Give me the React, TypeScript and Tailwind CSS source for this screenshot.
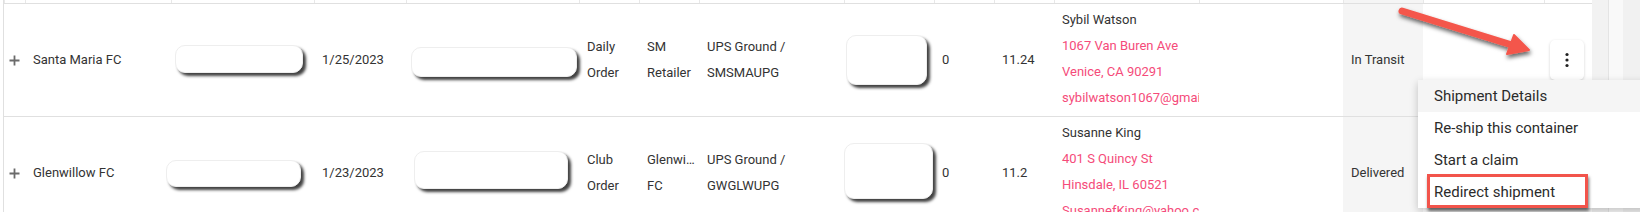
import React from 'react';

type Row = {
  name: string;
  pillA: string;
  date: string;
  pillB: string;
  orderType: string[];
  retailer: string[];
  service: string[];
  box: string;
  qty: string;
  weight: string;
  contact: string;
  address: string[];
  status: string;
};

const rows: Row[] = [
  {
    name: 'Santa Maria FC',
    pillA: 'ml-[4px] w-[128px] h-[28px] mt-[-2px]',
    date: '1/25/2023',
    pillB: 'ml-[5px] w-[166px] h-[30px] mt-[4px]',
    orderType: ['Daily', 'Order'],
    retailer: ['SM', 'Retailer'],
    service: ['UPS Ground /', 'SMSMAUPG'],
    box: 'ml-[2px] w-[81px] h-[50px]',
    qty: '0',
    weight: '11.24',
    contact: 'Sybil Watson',
    address: ['1067 Van Buren Ave', 'Venice, CA 90291', 'sybilwatson1067@gmail.com'],
    status: 'In Transit',
  },
  {
    name: 'Glenwillow FC',
    pillA: 'ml-[-5px] w-[135px] h-[27px] mt-[1px]',
    date: '1/23/2023',
    pillB: 'ml-[8px] w-[154px] h-[38px] mt-[-6px]',
    orderType: ['Club', 'Order'],
    retailer: ['Glenwillow', 'FC'],
    service: ['UPS Ground /', 'GWGLWUPG'],
    box: 'ml-0 w-[89px] h-[56px] mt-[-4px]',
    qty: '0',
    weight: '11.2',
    contact: 'Susanne King',
    address: ['401 S Quincy St', 'Hinsdale, IL 60521', 'SusannefKing@yahoo.com'],
    status: 'Delivered',
  },
];

const grid =
  'grid grid-cols-[21px_146px_143px_92px_173px_60px_60px_145px_90px_60px_60px_145px_144px_80px_121px_49px]';

function Lines({ items }: { items: string[] }) {
  return (
    <div className="flex flex-col pl-2 pr-[2px] leading-[26px] min-w-0">
      {items.map(t => (
        <span key={t} className="truncate">{t}</span>
      ))}
    </div>
  );
}

function Redacted({ cls }: { cls: string }) {
  return <div className={`shrink-0 bg-white rounded-[10px] border border-[#eeeeee] shadow-[3px_3px_3px_rgba(0,0,0,0.75)] ${cls}`} />;
}

function ShipmentRow({ row }: { row: Row }) {
  return (
    <div className={`${grid} shrink-0 h-[113px] border-b border-[#e0e0e0] items-center`}>
      <div className="flex justify-center h-full items-center">
        <svg width="11" height="11" viewBox="0 0 11 11">
          <path d="M5.5 0.5v10M0.5 5.5h10" stroke="#6b6b6b" strokeWidth="1.8" />
        </svg>
      </div>
      <div className="px-2 truncate">{row.name}</div>
      <div className="flex items-center h-full">
        <Redacted cls={row.pillA} />
      </div>
      <div className="px-2">{row.date}</div>
      <div className="flex items-center h-full">
        <Redacted cls={row.pillB} />
      </div>
      <Lines items={row.orderType} />
      <Lines items={row.retailer} />
      <Lines items={row.service} />
      <div className="flex items-center h-full">
        <Redacted cls={row.box} />
      </div>
      <div className="px-2">{row.qty}</div>
      <div className="px-2">{row.weight}</div>
      <div className="flex flex-col pl-2 leading-[26px] overflow-hidden whitespace-nowrap self-start pt-[3px]">
        <span>{row.contact}</span>
        {row.address.map(a => (
          <span key={a} className="text-[#f54b7a]">{a}</span>
        ))}
      </div>
      <div />
      <div className="h-full flex items-center px-2 bg-[#f5f5f5]">{row.status}</div>
      <div />
      <div />
    </div>
  );
}

export default function App() {
  return (
    <div className="relative w-[1640px] h-[212px] overflow-hidden bg-white text-[13px] text-[#333333] font-['Roboto','Liberation_Sans',sans-serif]">
      <div className="flex h-full">
        <div className="ml-[3px] w-[1589px] border-l border-[#e0e0e0] flex flex-col">
          {/* header edge */}
          <div className={`${grid} shrink-0 h-[3px] border-b border-[#e0e0e0] box-content`}>
            {Array.from({ length: 16 }).map((_, i) => (
              <div key={i} className={i === 13 ? 'bg-[#f5f5f5] border-l border-[#e8e8e8]' : 'border-l border-[#e8e8e8]'} />
            ))}
          </div>
          {rows.map(r => (
            <ShipmentRow key={r.name} row={r} />
          ))}
        </div>
        {/* scrollbar gutter */}
        <div className="flex flex-1 h-full">
          <div className="w-[17px] bg-[#f2f2f2] border-r border-[#e4e4e4]" />
          <div className="w-[14px] bg-[#f9f9f9]" />
          <div className="flex-1 bg-[#f1f1f1]" />
        </div>
      </div>

      {/* row actions button */}
      <button className="absolute left-[1550px] top-[40px] w-[34px] h-[40px] bg-white rounded-[5px] shadow-[0_1px_3px_rgba(0,0,0,0.18)] flex items-center justify-center">
        <svg width="4" height="16" viewBox="0 0 4 16">
          <circle cx="2" cy="2.5" r="1.6" fill="#222" />
          <circle cx="2" cy="8" r="1.6" fill="#222" />
          <circle cx="2" cy="13.5" r="1.6" fill="#222" />
        </svg>
      </button>

      {/* dropdown menu */}
      <div className="absolute left-[1418px] top-[80px] w-[260px] bg-white shadow-[0_3px_8px_rgba(0,0,0,0.22)] text-[15px] text-[#2b2b2b]">
        <div className="h-[32px] flex items-center pl-4 bg-[#f5f5f5]">Shipment Details</div>
        <div className="h-[32px] flex items-center pl-4">Re-ship this container</div>
        <div className="h-[32px] flex items-center pl-4">Start a claim</div>
        <div className="relative h-[32px] flex items-center pl-4">
          Redirect shipment
          <div className="absolute left-[9px] top-[-2px] w-[161px] h-[34px] border-[3px] border-[#f2544b] shadow-[1px_3px_3px_rgba(0,0,0,0.55)]" />
        </div>
      </div>

      {/* annotation arrow */}
      <svg className="absolute left-0 top-0 pointer-events-none" width="1640" height="212">
        <defs>
          <filter id="sh" x="-20%" y="-50%" width="140%" height="200%">
            <feDropShadow dx="1" dy="3" stdDeviation="2" floodColor="#000" floodOpacity="0.6" />
          </filter>
        </defs>
        <g filter="url(#sh)" fill="#f4574b">
          <path d="M1402 11 L1512 45" stroke="#f4574b" strokeWidth="7" strokeLinecap="round" />
          <path d="M1529 50 L1514 35 L1507 54 Z" stroke="#f4574b" strokeWidth="2" strokeLinejoin="round" />
        </g>
      </svg>
    </div>
  );
}
